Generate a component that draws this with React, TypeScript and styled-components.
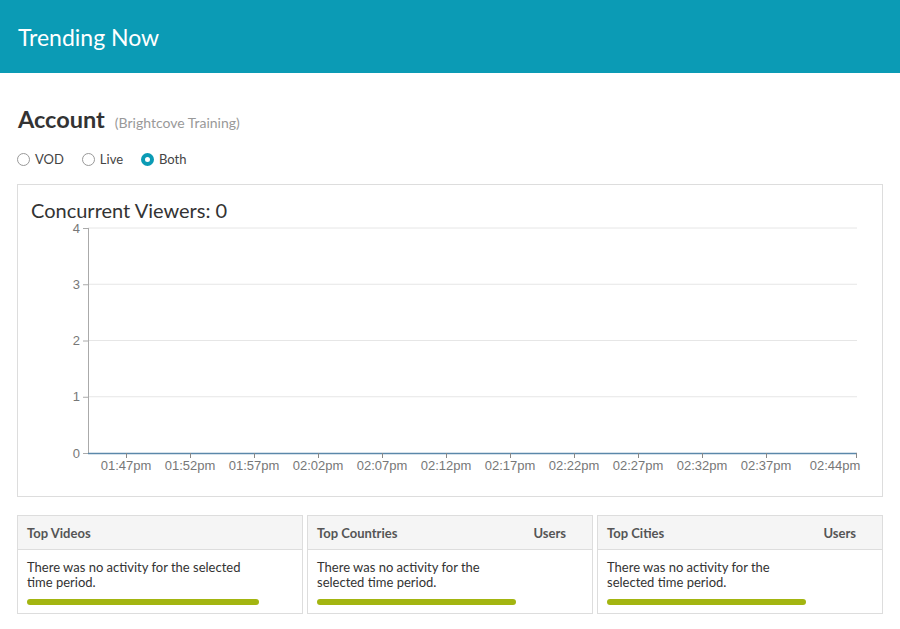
import { createGlobalStyle, styled } from "styled-components";

const GlobalStyle = createGlobalStyle`
  body {
    margin: 0;
    background: #fff;
    font-family: Lato, "Open Sans", sans-serif;
    color: #333;
  }
`;

const Header = styled.div`
  height: 73px;
  background: #0b9bb5;
  display: flex;
  align-items: center;
  padding-left: 18px;
  color: #fff;
  font-size: 23px;
`;

const Content = styled.div`
  padding: 32px 17px 0 17px;
  display: flex;
  flex-direction: column;
`;

const AccountRow = styled.div`
  display: flex;
  align-items: baseline;
  gap: 10px;
  padding-left: 1px;
  line-height: 28px;
`;

const AccountTitle = styled.span`
  font-size: 23.5px;
  font-weight: 700;
  color: #333;
`;

const AccountSub = styled.span`
  font-size: 14px;
  color: #999;
`;

const RadioRow = styled.div`
  display: flex;
  align-items: center;
  gap: 18px;
  margin-top: 14px;
  height: 16px;
`;

const RadioLabel = styled.label`
  display: flex;
  align-items: center;
  gap: 5px;
  font-size: 13px;
  color: #444;
`;

const RadioDot = styled.span<{ checked?: boolean }>`
  width: 13px;
  height: 13px;
  box-sizing: border-box;
  border-radius: 50%;
  border: ${({ checked }) => (checked ? "4px solid #0b9bb5" : "1px solid #999")};
  background: #fff;
`;

const ChartPanel = styled.div`
  margin-top: 17px;
  border: 1px solid #ddd;
  height: 311px;
  display: flex;
  flex-direction: column;
`;

const ChartTitle = styled.div`
  padding: 13px 0 0 13px;
  font-size: 20px;
  line-height: 24px;
  color: #333;
`;

const Cards = styled.div`
  margin-top: 18px;
  display: grid;
  grid-template-columns: 286px 286px 286px;
  gap: 4px;
`;

const Card = styled.div`
  border: 1px solid #ddd;
  height: 97px;
  display: flex;
  flex-direction: column;
`;

const CardHead = styled.div`
  height: 33px;
  background: #f5f5f5;
  border-bottom: 1px solid #ddd;
  display: flex;
  align-items: center;
  justify-content: space-between;
  padding: 0 26px 0 9px;
  font-size: 13px;
  font-weight: 700;
  color: #555;
`;

const CardBody = styled.div<{ width: number }>`
  padding: 10px 9px 0 9px;
  width: ${({ width }) => width}px;
  font-size: 13px;
  line-height: 15px;
  color: #333;
`;

const Bar = styled.div`
  margin-top: 9px;
  height: 6px;
  border-radius: 3px;
  background: #a3b511;
`;

const ticks = ["01:47pm", "01:52pm", "01:57pm", "02:02pm", "02:07pm", "02:12pm", "02:17pm", "02:22pm", "02:27pm", "02:32pm", "02:37pm"];

function Chart() {
  const yPos = (v: number) => 6 + (4 - v) * 56.25;
  return (
    <svg width="864" height="272" style={{ display: "block" }}>
      {[1, 2, 3, 4].map((v) => (
        <line key={v} x1={70} x2={839} y1={yPos(v)} y2={yPos(v)} stroke="#e6e6e6" />
      ))}
      <line x1={70.5} x2={70.5} y1={6} y2={231} stroke="#aaa" />
      {[0, 1, 2, 3, 4].map((v) => (
        <g key={v}>
          <line x1={65} x2={70} y1={yPos(v) + 0.5} y2={yPos(v) + 0.5} stroke="#aaa" />
          <text x={62} y={yPos(v) + 4.5} textAnchor="end" fontSize="13" fill="#777" fontFamily="Liberation Sans, Arial, sans-serif">
            {v}
          </text>
        </g>
      ))}
      <line x1={70} x2={839} y1={231.5} y2={231.5} stroke="#5b88aa" strokeWidth={1.5} />
      {ticks.map((t, i) => (
        <g key={t}>
          <line x1={108.5 + 64 * i} x2={108.5 + 64 * i} y1={231} y2={236} stroke="#888" />
          <text x={108 + 64 * i} y={248} textAnchor="middle" fontSize="13" fill="#777" fontFamily="Liberation Sans, Arial, sans-serif">
            {t}
          </text>
        </g>
      ))}
      <line x1={838.5} x2={838.5} y1={231} y2={236} stroke="#888" />
      <text x={817} y={248} textAnchor="middle" fontSize="13" fill="#777" fontFamily="Liberation Sans, Arial, sans-serif">
        02:44pm
      </text>
    </svg>
  );
}

const cards = [
  { title: "Top Videos", users: false, width: 232 },
  { title: "Top Countries", users: true, width: 199 },
  { title: "Top Cities", users: true, width: 199 },
];

export default function App() {
  return (
    <>
      <GlobalStyle />
      <Header>Trending Now</Header>
      <Content>
        <AccountRow>
          <AccountTitle>Account</AccountTitle>
          <AccountSub>(Brightcove Training)</AccountSub>
        </AccountRow>
        <RadioRow>
          <RadioLabel>
            <RadioDot /> VOD
          </RadioLabel>
          <RadioLabel>
            <RadioDot /> Live
          </RadioLabel>
          <RadioLabel>
            <RadioDot checked /> Both
          </RadioLabel>
        </RadioRow>
        <ChartPanel>
          <ChartTitle>Concurrent Viewers: 0</ChartTitle>
          <Chart />
        </ChartPanel>
        <Cards>
          {cards.map((c) => (
            <Card key={c.title}>
              <CardHead>
                <span>{c.title}</span>
                {c.users && <span>Users</span>}
              </CardHead>
              <CardBody width={c.width}>
                There was no activity for the selected time period.
                <Bar />
              </CardBody>
            </Card>
          ))}
        </Cards>
      </Content>
    </>
  );
}
